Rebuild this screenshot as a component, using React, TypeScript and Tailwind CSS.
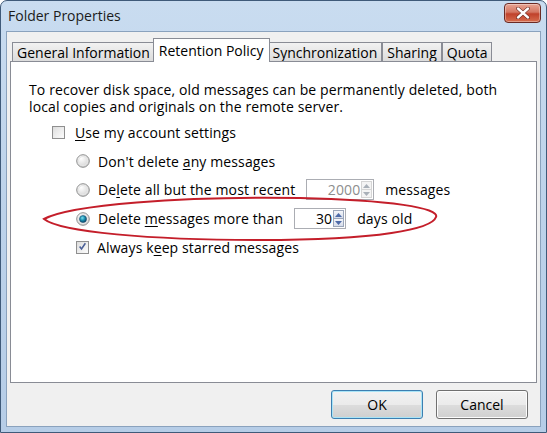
import React from "react";

function U({ children }: { children: React.ReactNode }) {
  return <span className="underline underline-offset-2 decoration-1">{children}</span>;
}

function Check({ checked }: { checked?: boolean }) {
  return (
    <span className="w-[13px] h-[13px] shrink-0 border border-[#8f8f8f] bg-gradient-to-br from-[#dcdcdc] to-[#fbfbfb] flex items-center justify-center">
      <span className="w-[9px] h-[9px] bg-gradient-to-br from-[#e0e0e0] to-[#fafafa] flex items-center justify-center">
        {checked && (
          <svg width="11" height="11" viewBox="0 0 11 11" className="-mt-[1px]">
            <path d="M2 5.5 L4.3 8.5 L9 1.5" fill="none" stroke="#4a5f97" strokeWidth="1.9" />
          </svg>
        )}
      </span>
    </span>
  );
}

function Radio({ checked }: { checked?: boolean }) {
  return (
    <svg width="14" height="14" viewBox="0 0 14 14" className="shrink-0">
      <defs>
        <radialGradient id="rbg" cx="0.35" cy="0.3" r="0.8">
          <stop offset="0" stopColor="#ffffff" />
          <stop offset="1" stopColor="#cfcfcf" />
        </radialGradient>
        <radialGradient id="rdot" cx="0.4" cy="0.35" r="0.7">
          <stop offset="0" stopColor="#7fe0f0" />
          <stop offset="0.5" stopColor="#1a8fb0" />
          <stop offset="1" stopColor="#0b3f62" />
        </radialGradient>
      </defs>
      <circle cx="7" cy="7" r="6.3" fill="url(#rbg)" stroke="#8e8f8f" strokeWidth="1" />
      <circle cx="7" cy="7" r="4.6" fill="none" stroke="#e6e6e6" strokeWidth="1" />
      {checked && <circle cx="7" cy="7" r="3.5" fill="url(#rdot)" stroke="#164b6e" strokeWidth="0.6" />}
    </svg>
  );
}

function Spin({ value, disabled, w }: { value: string; disabled?: boolean; w: string }) {
  const arrow = disabled ? "#a9b0b8" : "#4d6aa8";
  return (
    <span className={`${w} h-[21px] border border-[#abadb3] bg-white flex items-stretch`}>
      <span className={`flex-1 flex items-center justify-end pr-[1px] ${disabled ? "text-[#8d8d8d]" : "text-black"}`}>{value}</span>
      <span className="w-[11px] flex flex-col my-[1px] mr-[1px]">
        <span className={`flex-1 border ${disabled ? "border-[#d5d5d5] bg-[#f4f4f4]" : "border-[#9aa5b9] bg-gradient-to-b from-[#f4f6fa] to-[#d6dcea]"} flex items-center justify-center`}>
          <svg width="7" height="4" viewBox="0 0 7 4"><path d="M0 4 L3.5 0 L7 4 Z" fill={arrow} /></svg>
        </span>
        <span className={`flex-1 border-x border-b ${disabled ? "border-[#d5d5d5] bg-[#f4f4f4]" : "border-[#9aa5b9] bg-gradient-to-b from-[#f4f6fa] to-[#d6dcea]"} flex items-center justify-center`}>
          <svg width="7" height="4" viewBox="0 0 7 4"><path d="M0 0 L3.5 4 L7 0 Z" fill={arrow} /></svg>
        </span>
      </span>
    </span>
  );
}

function Tab({ label, active }: { label: string; active?: boolean }) {
  if (active) {
    return (
      <div className="relative z-10 -mx-[2px] h-[24px] -mb-[1px] px-[5px] bg-white border border-b-0 border-[#898c95] flex items-center">
        {label}
      </div>
    );
  }
  return (
    <div className="h-[19px] mt-[4px] px-[4px] bg-gradient-to-b from-[#f2f2f2] to-[#dcdcdc] border border-b-0 border-[#898c95] flex items-center">
      {label}
    </div>
  );
}

function Button({ label, primary }: { label: string; primary?: boolean }) {
  return (
    <div
      className={`w-[92px] h-[29px] rounded-[3px] border ${primary ? "border-[#3c7fb1] shadow-[inset_0_0_0_1px_#a9e4f7]" : "border-[#707070] shadow-[inset_0_0_0_1px_#fcfcfc]"} bg-[linear-gradient(to_bottom,#f2f2f2_0%,#ebebeb_50%,#dddddd_51%,#cfcfcf_100%)] flex items-center justify-center`}
    >
      {label}
    </div>
  );
}

export default function App() {
  return (
    <div className="w-[547px] h-[433px] relative font-['Segoe_UI','Open_Sans',sans-serif] text-[14px] text-black overflow-hidden">
      <div className="w-full h-full rounded-t-[7px] border border-[#3f5a79] bg-gradient-to-b from-[#c9dcf0] via-[#bcd2ea] to-[#b6cde7] flex flex-col">
        {/* title bar */}
        <div className="h-[30px] flex items-center justify-between pl-[7px] pr-[5px]">
          <span className="text-[14px] text-[#1b1b1b] -mt-[1px]">Folder Properties</span>
          <div className="w-[37px] h-[20px] -mt-[6px] rounded-[4px] border border-[#6a2a24] bg-[linear-gradient(to_bottom,#e8a493_0%,#d47763_45%,#c0412b_55%,#d66d4e_100%)] flex items-center justify-center shadow-[inset_0_0_0_1px_rgba(255,255,255,0.35)]">
            <svg width="14" height="12" viewBox="0 0 14 12">
              <path d="M2 1.5 L12 10.5 M12 1.5 L2 10.5" stroke="#5a1a12" strokeWidth="3.6" strokeLinecap="round" />
              <path d="M2 1.5 L12 10.5 M12 1.5 L2 10.5" stroke="#ffffff" strokeWidth="2.4" strokeLinecap="round" />
            </svg>
          </div>
        </div>

        {/* client area */}
        <div className="flex-1 mx-[5px] mb-[5px] bg-[#f0f0f0] border border-[#8aa2bd] flex flex-col px-[3px]">
          {/* tabs */}
          <div className="flex items-end pl-[2px] pt-[5px] h-[29px]">
            <Tab label="General Information" />
            <Tab label="Retention Policy" active />
            <Tab label="Synchronization" />
            <Tab label="Sharing" />
            <Tab label="Quota" />
          </div>

          {/* panel */}
          <div className="h-[322px] bg-white border border-[#898c95] pl-[18px] pt-[19px] relative tracking-[0.12px]">
            <div className="h-[17px] leading-[17px] whitespace-nowrap">
              To recover disk space, old messages can be permanently deleted, both
            </div>
            <div className="h-[17px] leading-[17px] whitespace-nowrap">
              local copies and originals on the remote server.
            </div>
            <div className="mt-[3px] flex flex-col">
              <div className="h-[28.75px] flex items-center pl-[23px] gap-[10px]">
                <Check />
                <span>
                  <U>U</U>se my account settings
                </span>
              </div>
              <div className="h-[28.75px] flex items-center pl-[47px] gap-[8px]">
                <Radio />
                <span>
                  Don't delete <U>a</U>ny messages
                </span>
              </div>
              <div className="h-[28.75px] flex items-center pl-[47px] gap-[8px]">
                <Radio />
                <span>
                  De<U>l</U>ete all but the most recent
                </span>
                <span className="ml-[3px]">
                  <Spin value="2000" disabled w="w-[68px]" />
                </span>
                <span className="ml-[3px]">messages</span>
              </div>
              <div className="h-[28.75px] flex items-center pl-[47px] gap-[8px]">
                <Radio checked />
                <span>
                  Delete <U>m</U>essages more than
                </span>
                <span className="ml-[3px]">
                  <Spin value="30" w="w-[52px]" />
                </span>
                <span className="ml-[3px]">days old</span>
              </div>
              <div className="h-[28.75px] flex items-center pl-[47px] gap-[8px]">
                <Check checked />
                <span>
                  Always k<U>e</U>ep starred messages
                </span>
              </div>
            </div>
          </div>

          {/* buttons */}
          <div className="flex-1 flex justify-end items-start pt-[7px] pr-[9px] gap-[13px]">
            <Button label="OK" primary />
            <Button label="Cancel" />
          </div>
        </div>
      </div>

      {/* red annotation ellipse */}
      <svg className="absolute left-0 top-0 pointer-events-none" width="547" height="433" viewBox="0 0 547 433">
        <path
          d="M44 219 C 70 205, 180 196, 300 198 C 390 200, 440 208, 436 217 C 432 229, 380 240, 260 240 C 150 240, 60 232, 44 219 Z"
          fill="none"
          stroke="#c41e2a"
          strokeWidth="2"
        />
      </svg>
    </div>
  );
}
